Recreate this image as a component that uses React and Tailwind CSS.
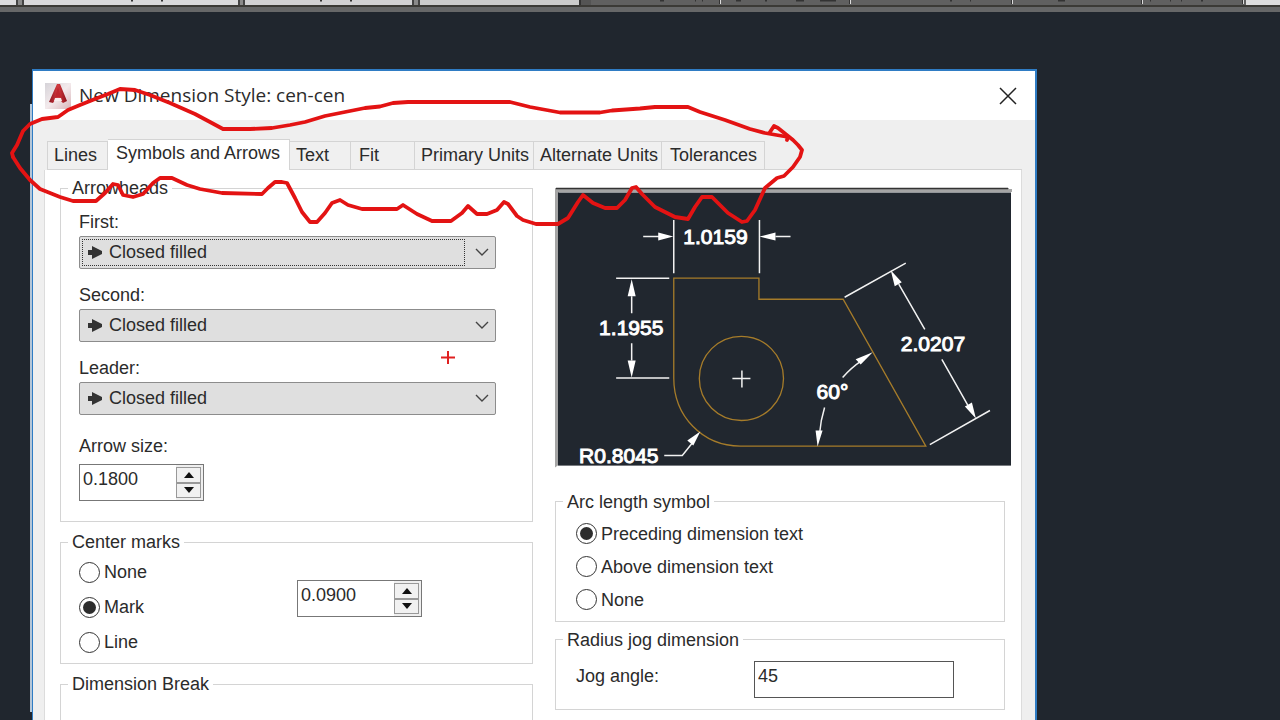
import React, { useState } from 'react';

const TABS = [
  { name: 'Lines', size: 'w-[61px] pl-[6px]' },
  { name: 'Symbols and Arrows', size: 'w-[182px] pl-2' },
  { name: 'Text', size: 'w-[61px] pl-[6px]' },
  { name: 'Fit', size: 'w-16 pl-2' },
  { name: 'Primary Units', size: 'w-[119px] pl-[6px]' },
  { name: 'Alternate Units', size: 'w-32 pl-[6px]' },
  { name: 'Tolerances', size: 'w-[103px] pl-2' },
];

const ARROW_TYPES = ['Closed filled', 'Closed blank', 'Closed', 'Dot', 'Open'];

function Toolbar() {
  return (
    <div className="relative" aria-hidden="true">
      <div className="flex h-[5px] bg-[#606060]">
        <div className="w-4 bg-[#dcdcde]" />
        <div className="w-2 border-x-2 border-[#444] bg-[#8a8a8a]" />
        <div className="w-[214px] bg-[#d9d9db]" />
        <div className="w-[7px] border-x-2 border-[#444] bg-[#8a8a8a]" />
        <div className="w-[167px] bg-[#d2d2d4]" />
        <div className="w-2 border-x-2 border-[#444] bg-[#8a8a8a]" />
        <div className="w-[159px] bg-[#cbcbcb]" />
        <div className="w-3 border-l-2 border-[#333] bg-[#545454]" />
        <div className="flex-1" />
        <div className="w-[34px] bg-[#dededf]" />
      </div>
      <div className="h-[2px] bg-[#3b3a36]" />
      <div className="h-[5px] bg-[#666768]" />
      <svg className="absolute left-0 top-0" width="1280" height="5" viewBox="0 0 1280 5">
        <path
          d="M131 0h2M161 0h2M320 0h2M350 0h2M660 0h4M695 0h1M702 0h1M736 0h5M765 0h2M796 0h8M820 0h16M950 0h2M970 0h1M1058 0h7M1150 0h1M1170 0h1M1181 0h1M1201 0h2"
          stroke="#333"
          strokeWidth="3"
        />
        <path d="M720.5 0v4M850.5 0v4M1012.5 0v4M1142.5 0v4M1243.5 0v4" stroke="#ddd" />
        <path d="M719.5 0v4M849.5 0v4M1011.5 0v4M1141.5 0v4M1242.5 0v4" stroke="#333" />
      </svg>
    </div>
  );
}

function AppLogo() {
  return (
    <svg width="26" height="26" viewBox="0 0 26 26" aria-hidden="true">
      <defs>
        <linearGradient id="logoBg" x1="0" y1="0" x2="1" y2="1">
          <stop offset="0" stopColor="#d5d3d8" />
          <stop offset="0.5" stopColor="#f3eaec" />
          <stop offset="1" stopColor="#d9b5b9" />
        </linearGradient>
        <linearGradient id="logoA" x1="0" y1="0" x2="1" y2="0">
          <stop offset="0" stopColor="#8f1620" />
          <stop offset="0.5" stopColor="#d23c41" />
          <stop offset="1" stopColor="#8d0f18" />
        </linearGradient>
      </defs>
      <rect width="26" height="26" fill="url(#logoBg)" />
      <path d="M12 1h3l7 17-4 2-3-3h-5l-2 3-4-1z" fill="url(#logoA)" />
      <path d="M13 4l-3 10h6z" fill="#bf262e" />
      <path d="M10 15h6l1 3H9z" fill="#f8eeee" />
    </svg>
  );
}

function Group({ title, className, children }) {
  return (
    <fieldset className={'border border-[#d4d4d4] ' + className}>
      <legend className="ml-[7px] px-1 h-6 leading-6">{title}</legend>
      {children}
    </fieldset>
  );
}

function ArrowSelect({ id, label, focused }) {
  return (
    <div className="flex flex-col gap-[2px]">
      <label htmlFor={id} className="h-6 leading-6">{label}</label>
      <div className="relative">
        <select
          id={id}
          className="block appearance-none w-full h-[33px] pl-[29px] rounded-xs border border-[#8c8c8c] bg-[#dfdfdf] outline-none"
        >
          {ARROW_TYPES.map((t) => (
            <option key={t}>{t}</option>
          ))}
        </select>
        {focused && (
          <span className="absolute left-[3px] right-[31px] inset-y-[3px] border border-dotted border-[#333] pointer-events-none" />
        )}
        <svg className="absolute left-[9px] top-[10px] pointer-events-none" width="14" height="13" viewBox="0 0 14 13" aria-hidden="true">
          <path d="M0 4h4V0l10 5v3L4 13V9H0z" fill="#333" />
        </svg>
        <svg className="absolute right-[7px] top-[12px] pointer-events-none" width="14" height="9" viewBox="0 0 14 9" aria-hidden="true">
          <path d="M1 1l6 6 6-6" fill="none" stroke="#444" strokeWidth="1.4" />
        </svg>
      </div>
    </div>
  );
}

function Spinner({ id, label, value, className = '' }) {
  return (
    <div className={'flex w-[125px] h-[37px] bg-[#efefef] border border-[#777] ' + className}>
      <input
        id={id}
        aria-label={label}
        defaultValue={value}
        className="min-w-0 flex-1 bg-white pl-[3px] pb-[6px] outline-none"
      />
      <div className="flex flex-col w-[27px] py-[2px] pr-[2px]">
        <button type="button" aria-label="Increase" className="flex-1 flex items-center justify-center border border-[#999] bg-[#f1f1f1]">
          <svg width="10" height="6" viewBox="0 0 10 6"><path d="M5 0l5 6H0z" fill="#111" /></svg>
        </button>
        <button type="button" aria-label="Decrease" className="flex-1 flex items-center justify-center border border-[#999] bg-[#f1f1f1]">
          <svg width="10" height="6" viewBox="0 0 10 6"><path d="M5 6l5-6H0z" fill="#111" /></svg>
        </button>
      </div>
    </div>
  );
}

function Radios({ name, options, value, className }) {
  const [picked, setPicked] = useState(value);
  return (
    <div className={'flex flex-col ' + className}>
      {options.map((o) => (
        <label key={o} className="flex items-center gap-1 h-[22px] leading-[22px]">
          <input
            type="radio"
            name={name}
            checked={picked === o}
            onChange={() => setPicked(o)}
            className="appearance-none w-[21px] h-[21px] rounded-full border border-[#333] bg-white checked:bg-[#2d2d2d] checked:bg-clip-content p-[3px]"
          />
          {o}
        </label>
      ))}
    </div>
  );
}

// sample part with its dimensions
function Preview() {
  return (
    <svg className="block w-full" viewBox="556 187 456 280" role="img" aria-label="Dimension style preview">
      <path d="M556 188h453v1h3v3h-452v272l-4 3z" fill="#a5a5a5" />
      <path d="M557 188.500h451" stroke="#333" strokeWidth="1.500" />
      <rect x="559" y="192.500" width="452" height="272.500" fill="#21272f" />
      <g fill="none" stroke="#a67c2a" strokeWidth="1.300">
        <path d="M674.500 278h85v21h84l82.500 146.500H741c-38 0-66.500-30-66.500-68z" />
        <circle cx="742" cy="378" r="42" />
      </g>
      <g fill="none" stroke="#f2f2f2" strokeWidth="1.500">
        <path d="M674.500 220v53M760 220v53M644 236.500h16M776 236.500h15" />
        <path d="M617 278h53M617 377.500h53M632.500 296v17M632.500 343v17" />
        <path d="M845 297l61-34M930 444l60-34M899 284l26 45M942 359l26 46" />
        <path d="M843 377q9-10 18-16M825 407q-4 13-5 26M665 455h18l12-15" />
        <path d="M733 378h18M742.500 370v17" />
      </g>
      <g fill="#fff">
        <path d="M674 236.500l-15-4v8zM760 236.500l16-4v8z" />
        <path d="M632.500 279l-4 17h8zM632.500 377l-4-17h8z" />
        <path d="M891 270l4 16 7-4zM976 418l-11-12 7-4z" />
        <path d="M873 352l-17 7 5 5zM818 446l-2-16h7z" />
        <path d="M701 431l-13 9 6 5z" />
      </g>
      <g fill="#fff" stroke="#fff" strokeWidth="1" fontSize="21">
        <text x="684" y="244">1.0159</text>
        <text x="600" y="335">1.1955</text>
        <text x="901" y="351">2.0207</text>
        <text x="817" y="399">60°</text>
        <text x="580" y="462">R0.8045</text>
      </g>
    </svg>
  );
}

// freehand pen marks drawn on top of the screen
function PenMarks() {
  return (
    <svg className="absolute left-0 top-0 pointer-events-none" width="1280" height="720" viewBox="0 0 1280 720" aria-hidden="true">
      <g fill="none" stroke="#e31313" strokeWidth="3.800" strokeLinejoin="round" strokeLinecap="round">
        <path d="M13 157L12 153 17 145 23 131 30 124 42 119 58 117 68 110 80 105 95 99 108 94 120 89 135 90 150 95 170 103 195 114 210 122 223 129 250 129 272 128 290 125 305 122 325 116 345 112 365 108 380 106.500 393 103 408 102 510 102 530 107 560 112.500 600 112.500 612 110.500 640 108.500 655 107 688 107 700 112 725 120 750 129 765 133 788 137" />
        <path d="M770 132L774 126 778 128 788 136 787 140M788 136L793 140 798 145 802 150 800 157 793 167 784 176 777 178 765 188 755 210 747 221 742 222 728 213 718 203 712 197 702 197 695 207 688 219 675 217 655 207 642 194 636 187 632 188 625 200 617 208 605 208 593 203 583 195 578 202 568 218 558 224 536 224 523 220 517 216 508 204 504 202 497 210 487 214 477 214 468 206 462 213 451 221 432 221 417 214 403 205 397 209 362 209 348 205 340 200 332 203 325 213 317 222 310 222 302 212 295 198 287 183 282 182 275 182 268 188 262 194 222 193 200 189 187 185 172 178 160 178 153 183 143 194 133 197 123 195 118 185 113 184 105 193 96 201 73 201 60 197 40 189 30 180 20 168 13 157" />
      </g>
      <path d="M441 357.500h14M448 351v13" stroke="#e02020" strokeWidth="2" />
    </svg>
  );
}

export default function App() {
  const [tab, setTab] = useState('Symbols and Arrows');

  return (
    <div className="relative h-screen overflow-hidden bg-[#20262e] text-[#2b2b2b] text-[18px] font-['Liberation_Sans',Arial,sans-serif]">
      <Toolbar />
      {/* edge of the window behind the dialog */}
      <div className="absolute left-[30px] top-[104px] bottom-2 w-[2px] bg-[#b4c6d8]" />

      <div className="ml-8 mr-[243px] mt-[57px] border-t-2 border-l border-r-2 border-[#2f7cc4] bg-[#efefef]">
        <header className="flex items-center h-[49px] pl-3 pr-[18px] bg-white">
          <AppLogo />
          <h1 className="ml-2 flex-1 text-[19px] font-['Open_Sans','Noto_Sans',sans-serif]">New Dimension Style: cen-cen</h1>
          <button type="button" aria-label="Close" className="w-[18px] h-[18px]">
            <svg width="18" height="18" viewBox="0 0 18 18"><path d="M1 1l16 16M17 1L1 17" stroke="#222" strokeWidth="1.500" /></svg>
          </button>
        </header>

        <div className="pt-[19px] pl-[11px] pr-[13px]">
          <div role="tablist" className="relative flex items-end pl-[3px] h-[31px]">
            {TABS.map((t, i) => (
              <button
                key={t.name}
                type="button"
                role="tab"
                aria-selected={tab === t.name}
                onClick={() => setTab(t.name)}
                className={
                  t.size +
                  ' shrink-0 text-left whitespace-nowrap border-t border-r border-[#d4d4d4] ' +
                  (i === 0 ? 'border-l ' : '') +
                  (tab === t.name ? 'h-[31px] pb-1 bg-white' : 'h-[29px] border-b bg-[#f0f0f0]')
                }
              >
                {t.name}
              </button>
            ))}
            <span className="flex-1 border-b border-[#d4d4d4]" />
          </div>

          <div className="grid grid-cols-[473fr_457fr] gap-x-[22px] pt-[6px] pl-[15px] pr-[9px] bg-white border-x border-[#dcdcdc]">
            <div className="flex flex-col gap-2">
              <Group title="Arrowheads" className="h-[346px]">
                <div className="flex flex-col gap-[14px] pt-[10px] pl-[18px] pr-9">
                  <ArrowSelect id="first" label="First:" focused />
                  <ArrowSelect id="second" label="Second:" />
                  <ArrowSelect id="leader" label="Leader:" />
                </div>
                <div className="flex flex-col gap-[6px] pt-[19px] pl-[18px]">
                  <label htmlFor="arrowSize" className="h-6 leading-6">Arrow size:</label>
                  <Spinner id="arrowSize" label="Arrow size" value="0.1800" />
                </div>
              </Group>

              <Group title="Center marks" className="h-[134px]">
                <div className="flex pt-[7px] pl-[18px]">
                  <Radios name="center" options={['None', 'Mark', 'Line']} value="Mark" className="gap-[13px] w-[218px]" />
                  <Spinner id="markSize" label="Mark size" value="0.0900" className="mt-[19px]" />
                </div>
              </Group>

              <Group title="Dimension Break" className="h-[120px]" />
            </div>

            <div className="pt-[11px]">
              <Preview />
              <div className="flex flex-col gap-[6px] pt-[22px] pr-[7px]">
                <Group title="Arc length symbol" className="h-[132px]">
                  <Radios
                    name="arc"
                    options={['Preceding dimension text', 'Above dimension text', 'None']}
                    value="Preceding dimension text"
                    className="gap-[11px] pt-[9px] pl-5"
                  />
                </Group>
                <Group title="Radius jog dimension" className="h-[82px]">
                  <div className="flex pt-[9px] pl-5">
                    <label htmlFor="jog" className="w-[178px] h-[30px] leading-[30px]">Jog angle:</label>
                    <input id="jog" defaultValue="45" className="w-[200px] h-[37px] pl-[3px] pb-[6px] border border-[#555] bg-white outline-none" />
                  </div>
                </Group>
              </div>
            </div>
          </div>
        </div>
      </div>
      <PenMarks />
    </div>
  );
}
